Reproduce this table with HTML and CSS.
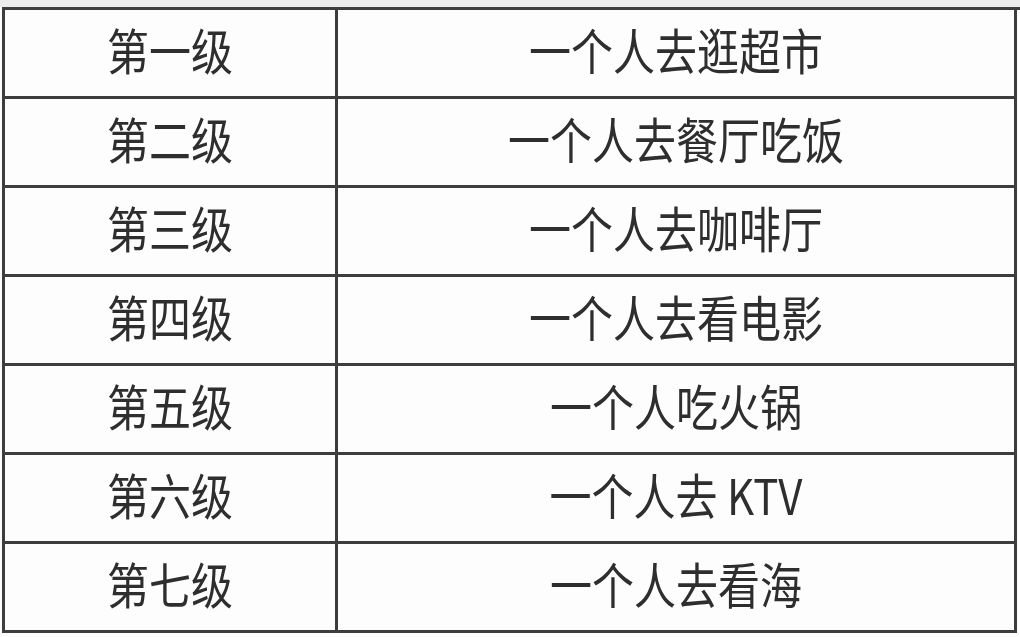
FILE: index.html
```html
<!DOCTYPE html>
<html lang="zh">
<head>
<meta charset="utf-8">
<title>一个人等级表</title>
<link rel="stylesheet" href="styles.css">
</head>
<body>
<div class="page">
  <div class="table">
    <div class="cell"><span class="txt">第一级</span></div><div class="cell"><span class="txt">一个人去逛超市</span></div>
    <div class="cell"><span class="txt">第二级</span></div><div class="cell"><span class="txt">一个人去餐厅吃饭</span></div>
    <div class="cell"><span class="txt">第三级</span></div><div class="cell"><span class="txt">一个人去咖啡厅</span></div>
    <div class="cell"><span class="txt">第四级</span></div><div class="cell"><span class="txt">一个人去看电影</span></div>
    <div class="cell"><span class="txt">第五级</span></div><div class="cell"><span class="txt">一个人吃火锅</span></div>
    <div class="cell"><span class="txt">第六级</span></div><div class="cell"><span class="txt">一个人去 KTV</span></div>
    <div class="cell"><span class="txt">第七级</span></div><div class="cell"><span class="txt">一个人去看海</span></div>
  </div>
</div>
</body>
</html>
```
FILE: styles.css
```css
html, body {
  margin: 0;
  padding: 0;
  background: #fafafa;
}
body {
  width: 1020px;
  height: 637px;
  overflow: hidden;
  font-family: "Noto Sans CJK SC", "Noto Sans", sans-serif;
}
.page {
  padding: 7px 0 0 2px;
  background: linear-gradient(#ececec 0, #ececec 7px, #fdfdfd 7px);
  height: 630px;
}
.table {
  width: 1015px;
  display: grid;
  grid-template-columns: 333px 679px;
  grid-auto-rows: 89px;
  border-top: 3px solid #3d3d3d;
  border-left: 3px solid #3d3d3d;
  background: #fdfdfd;
  filter: blur(0.5px);
}
.cell {
  border-right: 3px solid #3d3d3d;
  border-bottom: 3px solid #3d3d3d;
  display: flex;
  align-items: center;
  justify-content: center;
  font-size: 42px;
  color: #2e2e2e;
  line-height: 1;
  padding-bottom: 8px;
  box-sizing: border-box;
}
.txt {
  display: inline-block;
  transform: scaleY(1.17);
}
```
